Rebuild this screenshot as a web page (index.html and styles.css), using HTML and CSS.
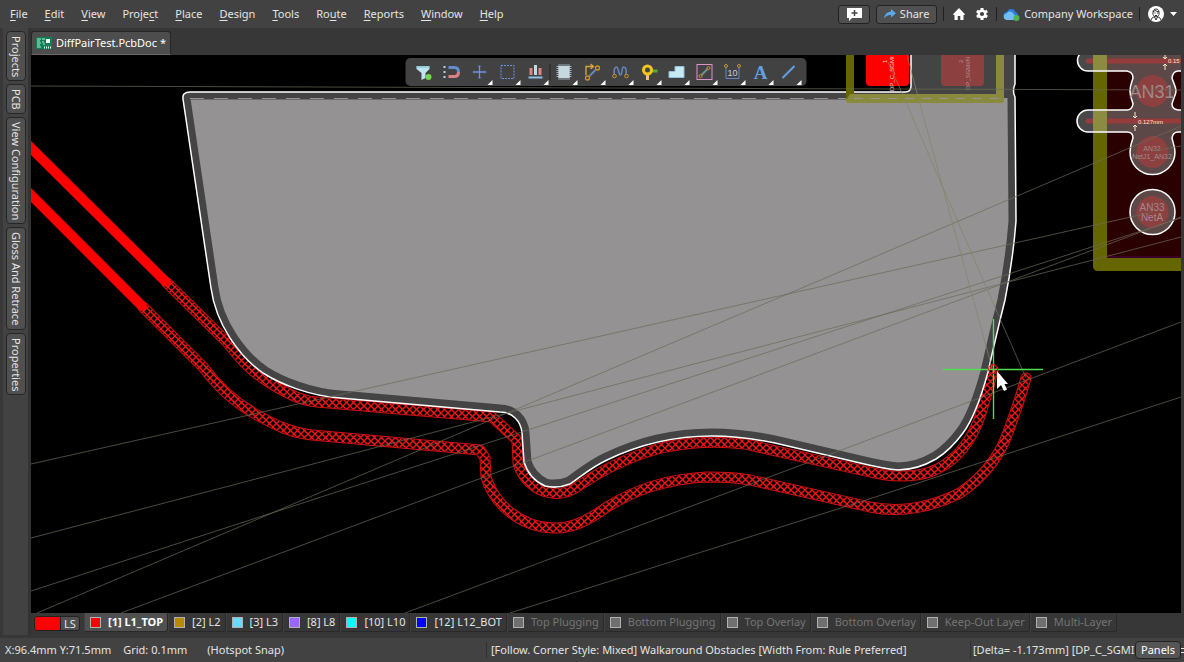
FILE: index.html
```html
<!DOCTYPE html>
<html lang="en">
<head>
<meta charset="utf-8">
<title>DiffPairTest.PcbDoc</title>
<link rel="stylesheet" href="styles.css">
</head>
<body>
<div class="app">
  <header class="topbar">
    <nav class="menu" aria-label="Main menu">
      <button><u>F</u>ile</button><button><u>E</u>dit</button><button><u>V</u>iew</button><button>Proje<u>c</u>t</button><button><u>P</u>lace</button><button><u>D</u>esign</button><button><u>T</u>ools</button><button>Ro<u>u</u>te</button><button><u>R</u>eports</button><button><u>W</u>indow</button><button><u>H</u>elp</button>
    </nav>
    <div class="account">
      <button class="boxed" aria-label="Comment"><svg width="17" height="14" viewBox="0 0 17 14"><path d="M1 1h15v10H6l-3 3v-3H1z" fill="#fff"/><path d="M8.500 3v6M5.500 6h6" stroke="#444" stroke-width="1.500"/></svg></button>
      <button class="boxed share"><svg width="12" height="10" viewBox="0 0 12 10"><path d="M7 0l5 4.200-5 4.200V6C4 5.800 2 7 0 9.500 .8 5.500 3 3 7 2.600z" fill="#5ba7e8"/></svg>Share</button>
      <span class="rule"></span>
      <button class="plain" aria-label="Home"><svg width="12" height="12" viewBox="0 0 12 12"><path d="M6 0l6 6.200-.7.800H10.500V12H7.300V8H4.700v4H1.500V7H.7L0 6.200z" fill="#fff"/></svg></button>
      <button class="plain" aria-label="Settings"><svg width="12" height="12" viewBox="-6 -6 12 12"><g fill="#fff"><path d="M-1.500-6h3V6h-3z"/><path d="M-1.500-6h3V6h-3z" transform="rotate(60)"/><path d="M-1.500-6h3V6h-3z" transform="rotate(120)"/><circle r="4.500"/></g><circle r="2.100" fill="#424242"/></svg></button>
      <span class="rule"></span>
      <button class="plain workspace"><svg width="17" height="13" viewBox="0 0 17 13"><path d="M4 11a3.500 3.500 0 010-7 4.500 4.500 0 018.500 0A3.800 3.800 0 0113 11z" fill="#2b7de0"/><path d="M3.500 12a3.300 3.300 0 010-6.500 4 4 0 017.300 1A2.800 2.800 0 0110.500 12z" fill="#74bdf4"/><circle cx="13.500" cy="10" r="3" fill="#4fb54a"/></svg>Company Workspace</button>
      <span class="rule"></span>
      <button class="plain profile" aria-label="Profile"><svg width="16" height="16" viewBox="0 0 16 16"><circle cx="8" cy="8" r="8" fill="#fff"/><path d="M3 14l1.500-2.500L7 10.500M13 14l-1.500-2.500L9 10.500M5 6c0-4 6-4 6 0v2.500c-1 3-5 3-6 0zM5 6l2-1.500L11 6M6.500 7h1M9 7h1M7 9.500h2M6.500 11L8 14l1.500-3" fill="none" stroke="#333"/></svg><svg width="7" height="4" viewBox="0 0 7 4"><path d="M0 0h7L3.500 4z" fill="#fff"/></svg></button>
    </div>
  </header>

  <aside class="sidebar">
    <button>Projects</button><button>PCB</button><button>View Configuration</button><button>Gloss And Retrace</button><button>Properties</button>
  </aside>

  <main class="workspace-area">
    <div class="documents">
      <button class="document"><svg width="16" height="12" viewBox="0 0 16 12"><path d="M0 0h16v12H0z" fill="#0d8055"/><path d="M1 2h4M1 4h3M1 6h4M1 8h3M1 10h4M6 2h3M6 5h2M7 7h2" stroke="#b9ead3"/><path d="M10 2h4v4h-4z" fill="#e8fff5"/><path d="M8 10.500h7" stroke="#d5f7e8" stroke-width="2" stroke-dasharray="1 1"/></svg>DiffPairTest.PcbDoc *</button>
    </div>

    <div class="editor">
      <svg class="board" viewBox="31 55 1150 558" preserveAspectRatio="xMidYMid slice" role="img" aria-label="Board layout">
        <defs>
          <pattern id="hatch" width="7" height="7" patternUnits="userSpaceOnUse"><path d="M-1-1l9 9M-1 8l9-9" stroke="#f41616" stroke-width="1.400"/></pattern>
          <path id="pour" d="M190 92H905Q911 92 911 86V50H1015V84Q1012 91 1015 97L1016 221Q1013 260 1005 300Q997 332 988 372C979 405 972 421 963 433C952 448 944 454 936 459C924 466 912 470 898 470Q885 469 860 463L775 443Q740 436 712 436C675 436 640 444 607 460C592 467 583 475 570 484Q557 489 545 486C534 481 527 472 524 462L522 433C521 421 512 412 500 412L340 398C310 396 280 384 263 373C240 357 216 325 211 288L183 99Q182 92 190 92Z"/>
          <clipPath id="pour-clip"><use href="#pour"/></clipPath>
          <path id="track-a" d="M167 283L227 342C237 355 250 371 270 383C285 392 300 401 317 402L492 417L517 440L518 463C522 478 536 492 552 493C564 495 573 490 580 485C610 465 640 453 665 447C695 441 720 441 745 444L870 472C890 477 910 478 930 472C955 463 969 444 978 422C984 405 988 390 993 370"/>
          <path id="track-b" d="M143 307L203 367C218 387 235 403 257 415C275 425 292 433 312 435L480 450L485 458L486 477C494 504 520 527 553 528C573 529 590 519 607 507C635 490 665 479 707 477C720 477 735 477 750 480L870 507C900 513 930 508 960 493C985 476 998 456 1005 440C1014 417 1019 403 1026 378"/>
        </defs>
        <path d="M25 55h1160v560H25z" fill="#000"/>

        <g fill="none" stroke-linecap="round" stroke-linejoin="round">
          <g stroke="#d81010" stroke-width="11"><use href="#track-a"/><use href="#track-b"/></g>
          <g stroke="#000" stroke-width="9"><use href="#track-a"/><use href="#track-b"/></g>
          <g stroke="url(#hatch)" stroke-width="9"><use href="#track-a"/><use href="#track-b"/></g>
          <path d="M20 137L166 282M20 184L142 306" stroke="#f00" stroke-width="10"/>
        </g>

        <g clip-path="url(#pour-clip)">
          <use href="#pour" fill="#949293"/>
          <use href="#pour" fill="none" stroke="#444" stroke-width="15"/>
          <path d="M904 50h112v48H904z" fill="#444"/>
        </g>
        <path d="M190 98.500H1006" stroke="#949293" stroke-dasharray="14 10"/>
        <use href="#pour" fill="none" stroke="#fff" stroke-width="1.500"/>

        <path d="M846 50h8v44h142V50h8v50q0 3-3 3H849q-3 0-3-3z" fill="#8a8a3e"/>
        <path d="M846 50h8v44h-4l-4 6z" fill="#666600"/>
        <path d="M854 98.500H1004" stroke="#949293" stroke-dasharray="9 8"/>
        <rect x="866" y="45" width="43" height="41" rx="4" fill="#f00"/>
        <rect x="941" y="45" width="43" height="41" rx="4" fill="#8c4040"/>
        <text class="pin pin-lit" transform="translate(894 91) rotate(-90)">DP_C_SGMI</text>
        <text class="pin pin-lit" transform="translate(887 63) rotate(-90)">1</text>
        <text class="pin" transform="translate(970 90) rotate(-90)">DP_SGMI/N</text>
        <text class="pin" transform="translate(963 63) rotate(-90)">2</text>

        <path d="M1107 50h74v208h-74z" fill="#2b0000"/>
        <path d="M1093 50h14v208h78v13h-87q-5 0-5-5z" fill="#666600"/>
        <path d="M1107 257h74" stroke="#4a0048"/>
        <g fill="#8f8f8f" fill-opacity=".5" stroke="#fff" stroke-width="1.500">
          <path d="M1190 50H1088a10.500 10.500 0 000 21H1127Q1133 72 1133 78C1132 82 1130 85 1130 91S1132 99 1133 104Q1132 110 1127 110H1088a11 11 0 000 22H1127Q1133 132 1133 138C1131 143 1130 147 1130 152A22.500 22.500 0 001175 152C1175 147 1173 143 1172 138Q1173 132 1178 132H1190V110H1178Q1172 109 1172 104C1173 99 1176 95 1176 91S1173 82 1172 78Q1173 71 1178 71H1190Z"/>
          <circle cx="1152.500" cy="212" r="22.500"/>
        </g>
        <g stroke="#963c3c" stroke-width="5" stroke-linecap="round"><path d="M1088 61H1190M1088 121H1190"/></g>
        <path d="M1093 50h14v20h-14zM1093 111h14v20h-14z" fill="#8c8c40"/>
        <g fill="#8c4040"><circle cx="1152.500" cy="91" r="16"/><circle cx="1152.500" cy="152" r="16"/><circle cx="1152.500" cy="212" r="16"/></g>
        <g class="pad-name" text-anchor="middle">
          <text class="pad-large" x="1152" y="98">AN31</text>
          <text class="pad-small" x="1152" y="151">AN32</text><text class="pad-small" x="1152" y="159">NetJ1_AN32</text>
          <text class="pad-medium" x="1152" y="211">AN33</text><text class="pad-medium" x="1152" y="221">NetA</text>
        </g>
        <g fill="none" stroke="#ffe7c8"><path d="M1135 112v6m-2-2l2 2 2-2M1135 131v-6m-2 2l2-2 2 2M1165 55v4m-2-2l2 2 2-2M1165 70v-6m-2 2l2-2 2 2"/></g>
        <text class="dimension" x="1138" y="124">0.127mm</text>
        <text class="dimension" x="1168" y="63">0.15</text>

        <g class="ratlines">
          <path d="M31 86L1181 90M31 464L1153 212M31 538L633 380 1181 237M31 591L460 452 682 380 1181 218M37 613L460 433 830 276 1181 126M121 613L460 486 740 382 1181 217M405 613L740 488 860 443 1181 322M510 613L708 550 860 502 1181 397M1153 151L1181 146"/>
          <path d="M997 312L1026 378"/>
        </g>
        <path class="soft-lines" d="M888 62L902 93 997 312M907 55L917 93 992 368"/>

        <path d="M943 369.500H1043M993.500 319V419" stroke="#50dc50" stroke-width="1.400"/>
        <circle cx="993" cy="369" r="4.500" fill="none" stroke="#d81010"/>
        <path d="M997 371V389L1001 385 1004 391 1007 389.500 1004.500 384H1008z" fill="#fff"/>
      </svg>

      <div class="toolbar" role="toolbar" aria-label="Board tools">
        <button aria-label="Filter"><svg viewBox="0 0 28 28"><path d="M7 8h13v3l-4 4v5l-4 2v-7l-5-4z" fill="#bce5ee"/><path d="M7 9h13" stroke="#7ab4c5"/><circle cx="19" cy="19" r="3" fill="#72d94b"/></svg></button>
        <button aria-label="Snapping"><svg viewBox="0 0 28 28"><path d="M11 9.500h6q4 0 4 4.500" fill="none" stroke="#658bc9" stroke-width="3"/><path d="M21 14q0 4.500-4 4.500h-6" fill="none" stroke="#dc8287" stroke-width="3"/><path d="M7 8v12" stroke="#bdd2db" stroke-width="2" stroke-dasharray="2 3"/></svg></button>
        <button aria-label="Origin"><svg viewBox="0 0 28 28"><path d="M7.500 14h13M14 7.500v13" stroke="#6f95dc" stroke-width="1.300"/><path d="M12.500 9l1.500-2 1.500 2M12.500 19l1.500 2 1.500-2M9 12.500l-2 1.500 2 1.500M19 12.500l2 1.500-2 1.500" fill="none" stroke="#536ea2"/><use href="#more"/></svg></button>
        <button aria-label="Select area"><svg viewBox="0 0 28 28"><rect x="7.500" y="7.500" width="13" height="13" fill="none" stroke="#6f90e8" stroke-dasharray="2 1"/><use href="#more"/></svg></button>
        <button aria-label="Align"><svg viewBox="0 0 28 28"><path d="M8 10h3v7H8zM17 10h3v7h-3z" fill="#dc8585"/><path d="M12.500 7h3v10h-3z" fill="#bdd9e2"/><path d="M7 19.500h14" stroke="#8fbfe3" stroke-width="2"/><use href="#more"/></svg></button>
        <span class="tool-rule"></span>
        <button aria-label="Place component"><svg viewBox="0 0 28 28"><path d="M8.500 6v16M10.500 6v16M12.500 6v16M14.500 6v16M16.500 6v16M18.500 6v16M6 8.500h15M6 10.500h15M6 12.500h15M6 14.500h15M6 16.500h15M6 18.500h15" stroke="#9dadb4"/><rect x="8" y="8" width="11" height="12" fill="#c6d7de"/><use href="#more"/></svg></button>
        <button aria-label="Route track"><svg viewBox="0 0 28 28"><path d="M7.500 17V8.500h7M12 6l3 2.500-3 2.500" fill="none" stroke="#d5a536" stroke-width="1.400"/><path d="M11 18l6-6" stroke="#6586ba" stroke-width="2"/><g fill="#444" stroke="#c99529" stroke-width="1.300"><circle cx="9" cy="20" r="2"/><circle cx="19" cy="10" r="2"/></g><use href="#more"/></svg></button>
        <button aria-label="Tune length"><svg viewBox="0 0 28 28"><path d="M8 18C7 12 8 9 10 9s2 8 4 8 1-8 3-8 4 3 2 9" fill="none" stroke="#6586c4" stroke-width="1.500"/><g fill="#444" stroke="#c99529"><circle cx="8" cy="18" r="1.800"/><circle cx="20" cy="18" r="1.800"/></g><use href="#more"/></svg></button>
        <button aria-label="Place via"><svg viewBox="0 0 28 28"><path d="M14 13h9" stroke="#5bac35" stroke-width="3"/><path d="M13 14v8" stroke="#efc27e" stroke-width="3"/><circle cx="13" cy="12" r="4" fill="#444" stroke="#f1c51d" stroke-width="3"/><use href="#more"/></svg></button>
        <button aria-label="Place polygon"><svg viewBox="0 0 28 28"><path d="M6.500 19.500v-6h6v-5h9v11z" fill="#c7e9f1" stroke="#92c2db"/><use href="#more"/></svg></button>
        <button aria-label="Differential pair"><svg viewBox="0 0 28 28"><rect x="6.500" y="6.500" width="15" height="15" fill="none" stroke="#dc91d2"/><path d="M11 17l6-6" stroke="#718f99" stroke-width="2"/><g fill="#444" stroke="#c99529"><circle cx="10" cy="18" r="1.500"/><circle cx="18" cy="10" r="1.500"/></g><use href="#more"/></svg></button>
        <button aria-label="Place dimension"><svg viewBox="0 0 28 28"><path d="M7.500 10v10.500h13V10" fill="none" stroke="#6386c8"/><g fill="#444" stroke="#c99529"><circle cx="7.500" cy="8" r="1.500"/><circle cx="20.500" cy="8" r="1.500"/></g><text class="tool-number" x="14" y="18" text-anchor="middle">10</text><use href="#more"/></svg></button>
        <button aria-label="Place text"><svg viewBox="0 0 28 28"><text class="tool-letter" x="14" y="21" text-anchor="middle">A</text><use href="#more"/></svg></button>
        <button aria-label="Place line"><svg viewBox="0 0 28 28"><path d="M8 20L20 8" stroke="#629fe3" stroke-width="2"/><path id="more" d="M27 22v5h-5z" fill="#fff"/></svg></button>
      </div>
    </div>

    <div class="layers">
      <button class="layer-set"><span class="set-color"></span><span class="set-name">LS</span></button>
      <button class="layer active"><i class="swatch red"></i>[1] L1_TOP</button>
      <button class="layer"><i class="swatch gold"></i>[2] L2</button>
      <button class="layer"><i class="swatch sky"></i>[3] L3</button>
      <button class="layer"><i class="swatch violet"></i>[8] L8</button>
      <button class="layer"><i class="swatch cyan"></i>[10] L10</button>
      <button class="layer"><i class="swatch blue"></i>[12] L12_BOT</button>
      <button class="layer off"><i class="swatch"></i>Top Plugging</button>
      <button class="layer off"><i class="swatch"></i>Bottom Plugging</button>
      <button class="layer off"><i class="swatch"></i>Top Overlay</button>
      <button class="layer off"><i class="swatch"></i>Bottom Overlay</button>
      <button class="layer off"><i class="swatch"></i>Keep-Out Layer</button>
      <button class="layer off"><i class="swatch"></i>Multi-Layer</button>
    </div>
  </main>

  <footer class="status">
    <div class="readout"><span>X:96.4mm Y:71.5mm</span><span>Grid: 0.1mm</span><span class="snap">(Hotspot Snap)</span></div>
    <div class="mode">[Follow. Corner Style: Mixed] Walkaround Obstacles [Width From: Rule Preferred]</div>
    <div class="delta"><span class="delta-text">[Delta= -1.173mm] [DP_C_SGMI</span><button class="panels">Panels</button><span class="tail"></span></div>
  </footer>
</div>
</body>
</html>
```
FILE: styles.css
```css
* { box-sizing: border-box; }
body { margin: 0; background: #373737; color: #e4e4e4; font: 11px/16px "Noto Sans", "Open Sans", sans-serif; }
button { margin: 0; padding: 0; border: 0; background: none; color: inherit; font: inherit; white-space: nowrap; }
svg { display: block; flex: none; }

.app { display: grid; grid-template: 28px minmax(0, 1fr) 24px / 31px minmax(0, 1fr); height: 100vh; overflow: hidden; }

.topbar { grid-column: 1 / -1; display: flex; justify-content: space-between; align-items: center; padding: 0 7px 0 10px; background: #424242; }
.menu { display: flex; gap: 17px; }
.menu u { text-underline-offset: 2px; }
.account { display: flex; align-items: center; gap: 6px; }
.boxed { display: flex; align-items: center; justify-content: center; gap: 4px; width: 32px; height: 19px; border: 1px solid #222; border-radius: 3px; background: #505050; }
.share { width: 61px; }
.plain { display: flex; align-items: center; justify-content: center; min-width: 17px; gap: 4px; }
.profile { gap: 6px; padding-left: 2px; }
.rule { width: 1px; height: 14px; background: #202020; }

.sidebar { display: flex; flex-direction: column; gap: 3px; padding: 3px 5px 0 6px; margin-bottom: 3px; background: linear-gradient(90deg, #383838 3px, #424242 3px, #424242 28px, #333 28px); }
.sidebar button { writing-mode: vertical-rl; width: 20px; padding: 4px 0 3px; border: 1px solid #262626; border-radius: 4px; background: #505050; line-height: 18px; }

.workspace-area { display: flex; flex-direction: column; min-width: 0; padding-right: 3px; }
.documents { display: flex; align-items: flex-end; height: 27px; }
.document { display: flex; align-items: center; gap: 4px; height: 24px; padding: 0 4px; border: 1px solid #262626; border-bottom-color: #686868; border-radius: 3px 3px 0 0; background: #4d4d4d; color: #fff; }

.editor { position: relative; flex: 1; min-height: 0; overflow: hidden; background: #000; }
.board { width: 100%; height: 100%; }
.board text { font-family: "Liberation Sans", Arial, sans-serif; }
.pin { font-size: 6px; fill: #b09090; }
.pin-lit { fill: #ffd0d0; }
.pad-name { fill: #a18a8a; }
.pad-large { font-size: 18px; }
.pad-medium { font-size: 10px; }
.pad-small { font-size: 7px; }
.dimension { font-size: 6px; fill: #ffe7c8; }
.ratlines { fill: none; stroke: #6b6b5a; stroke-opacity: .7; }
.soft-lines { fill: none; stroke: #85856a; stroke-opacity: .7; }

.toolbar { position: absolute; top: 3px; left: 50%; transform: translateX(-50%); display: flex; align-items: center; padding: 0 4px; border-radius: 5px; background: #424242; }
.toolbar button, .toolbar svg { width: 28px; height: 28px; }
.tool-rule { width: 1px; height: 16px; background: #242424; }
.toolbar .tool-number { font: 9px "Liberation Sans", sans-serif; fill: #c2d1d8; }
.toolbar .tool-letter { font: bold 19px "Liberation Serif", serif; fill: #629fe3; }

.layers { display: flex; height: 25px; padding-left: 3px; align-items: flex-start; }
.layer-set { display: flex; flex: none; width: 46px; height: 15px; margin: 3px 4px 0 0; border: 1px solid #222; border-radius: 3px; overflow: hidden; background: #505050; line-height: 13px; }
.set-color { width: 26px; height: 13px; border-right: 1px solid #222; background: #f00; }
.set-name { flex: 1; }
.layer { display: flex; align-items: center; gap: 7px; height: 19px; padding: 0 4px 0 5px; border: 1px solid #292929; border-top: 0; border-left-color: #414141; border-radius: 0 0 3px 3px; }
.active { background: #505050; color: #fff; font-weight: bold; }
.off { color: #747474; }
.swatch { width: 11px; height: 11px; border: 1px solid #b0b0b0; background: #707070; }
.red { background: #f00; }
.gold { background: #b88a00; }
.sky { background: #6cd8fb; }
.violet { background: #9966ff; }
.cyan { background: #0ff; }
.blue { background: #00f; }

.status { grid-column: 1 / -1; display: grid; grid-template-columns: 486fr 484fr 214fr; align-items: center; background: #424242; white-space: nowrap; }
.readout { display: flex; gap: 12px; padding-left: 5px; }
.snap { padding-left: 8px; }
.mode, .delta { min-width: 0; padding-left: 4px; border-left: 1px solid #303030; }
.delta { display: flex; align-items: center; padding-left: 2px; overflow: hidden; }
.delta-text { flex: 1; min-width: 0; overflow: hidden; }
.panels { width: 46px; height: 18px; border: 1px solid #222; border-radius: 4px; background: #555; color: #fff; }
.tail { width: 3px; height: 5px; border: solid #e4e4e4; border-width: 1px 0; }
```
